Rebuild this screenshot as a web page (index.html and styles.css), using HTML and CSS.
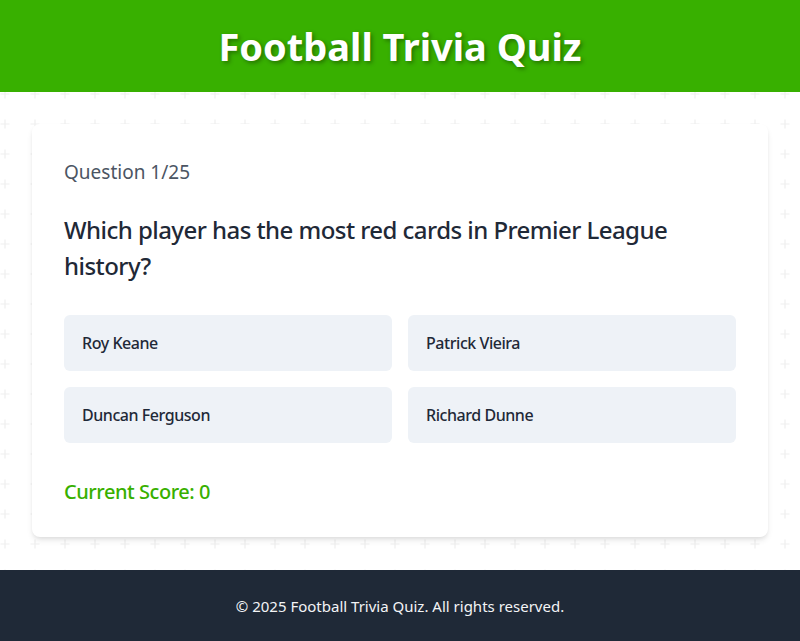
FILE: index.html
```html
<!DOCTYPE html>
<html lang="en">
<head>
<meta charset="utf-8">
<title>Football Trivia Quiz</title>
<link rel="stylesheet" href="styles.css">
</head>
<body>
<header class="site-header">
  <h1 class="title">Football Trivia Quiz</h1>
</header>
<main class="main">
  <section class="card">
    <p class="counter">Question 1/25</p>
    <h2 class="question">Which player has the most red cards in Premier League history?</h2>
    <div class="options">
      <button class="option">Roy Keane</button>
      <button class="option">Patrick Vieira</button>
      <button class="option">Duncan Ferguson</button>
      <button class="option">Richard Dunne</button>
    </div>
    <p class="score">Current Score: 0</p>
  </section>
</main>
<footer class="site-footer">
  <p class="copy">© 2025 Football Trivia Quiz. All rights reserved.</p>
</footer>
</body>
</html>
```
FILE: styles.css
```css
* { box-sizing: border-box; }
html, body { margin: 0; padding: 0; }
body {
  font-family: "Noto Sans", "Open Sans", sans-serif;
  color: #1f2937;
  background-color: #ffffff;
  background-image: url("data:image/svg+xml;utf8,<svg xmlns='http://www.w3.org/2000/svg' width='30' height='30'><path d='M15 10.5v9M10.5 15h9' stroke='%23efefef' stroke-width='1.2' fill='none'/></svg>");
  background-size: 30px 30px;
  background-position: -10px -11px;
}
.site-header {
  background: #38b000;
  height: 92px;
  display: flex;
  align-items: center;
  justify-content: center;
}
.title {
  margin: 0;
  color: #ffffff;
  font-size: 38px;
  font-weight: 700;
  line-height: 44px;
  text-shadow: 2px 2px 4px rgba(0,0,0,0.35);
}
.main {
  padding: 32px 32px 33px;
}
.card {
  background: #ffffff;
  border-radius: 8px;
  box-shadow: 0 4px 6px -1px rgba(0,0,0,0.1), 0 2px 4px -1px rgba(0,0,0,0.06);
  padding: 32px 32px 31px;
}
.counter {
  margin: 0 0 26px;
  padding-top: 2px;
  font-size: 19px;
  line-height: 28px;
  color: #4b5563;
}
.question {
  margin: 0 0 31px;
  font-size: 24px;
  line-height: 36px;
  font-weight: 500;
  letter-spacing: -0.55px;
  color: #1f2937;
}
.options {
  display: grid;
  grid-template-columns: 1fr 1fr;
  gap: 16px;
  margin-bottom: 35px;
}
.option {
  height: 56px;
  border: none;
  border-radius: 6px;
  background: #eef2f7;
  text-align: left;
  padding: 0 18px;
  font-family: inherit;
  font-size: 16px;
  font-weight: 500;
  letter-spacing: -0.45px;
  color: #1f2937;
}
.score {
  margin: 0;
  font-size: 20px;
  line-height: 28px;
  font-weight: 500;
  letter-spacing: -0.45px;
  color: #38b000;
}
.site-footer {
  background: #1f2937;
  padding: 24px 0 26px;
  text-align: center;
}
.copy {
  margin: 0;
  color: #f3f4f6;
  font-size: 15px;
  line-height: 24px;
}
```
